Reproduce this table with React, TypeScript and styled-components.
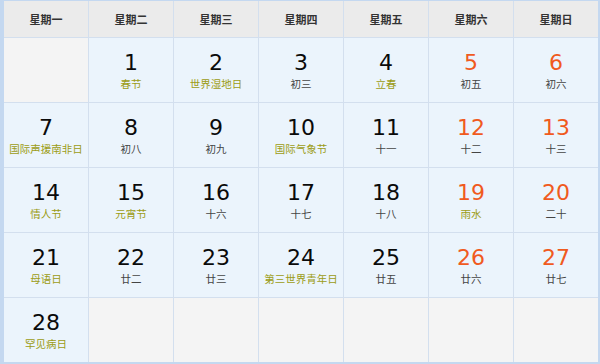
import React from 'react';
import styled, { createGlobalStyle } from 'styled-components';

const GlobalStyle = createGlobalStyle`
  html, body {
    margin: 0;
    padding: 0;
    background: #ffffff;
  }
`;

type Day = {
  num?: number;
  sub?: string;
  festival?: boolean;
};

const WEEK = ['星期一', '星期二', '星期三', '星期四', '星期五', '星期六', '星期日'];

const DAYS: Day[] = [
  {},
  { num: 1, sub: '春节', festival: true },
  { num: 2, sub: '世界湿地日', festival: true },
  { num: 3, sub: '初三' },
  { num: 4, sub: '立春', festival: true },
  { num: 5, sub: '初五' },
  { num: 6, sub: '初六' },
  { num: 7, sub: '国际声援南非日', festival: true },
  { num: 8, sub: '初八' },
  { num: 9, sub: '初九' },
  { num: 10, sub: '国际气象节', festival: true },
  { num: 11, sub: '十一' },
  { num: 12, sub: '十二' },
  { num: 13, sub: '十三' },
  { num: 14, sub: '情人节', festival: true },
  { num: 15, sub: '元宵节', festival: true },
  { num: 16, sub: '十六' },
  { num: 17, sub: '十七' },
  { num: 18, sub: '十八' },
  { num: 19, sub: '雨水', festival: true },
  { num: 20, sub: '二十' },
  { num: 21, sub: '母语日', festival: true },
  { num: 22, sub: '廿二' },
  { num: 23, sub: '廿三' },
  { num: 24, sub: '第三世界青年日', festival: true },
  { num: 25, sub: '廿五' },
  { num: 26, sub: '廿六' },
  { num: 27, sub: '廿七' },
  { num: 28, sub: '罕见病日', festival: true },
  {}, {}, {}, {}, {}, {},
];

const Calendar = styled.div`
  width: 600px;
  height: 364px;
  box-sizing: border-box;
  display: grid;
  grid-template-columns: repeat(7, 84px);
  grid-template-rows: 36px repeat(5, 64px);
  gap: 1px;
  background: #d3dfee;
  border-style: solid;
  border-color: #c4d8f0;
  border-width: 1px 2px 2px 4px;
`;

const HeadCell = styled.div`
  background: #ebebeb;
  display: flex;
  align-items: center;
  justify-content: center;
  font-family: "Noto Sans CJK SC", sans-serif;
  font-weight: bold;
  font-size: 11px;
  color: #333333;
`;

const DayCell = styled.div<{ $empty: boolean }>`
  background: ${p => (p.$empty ? '#f4f4f4' : '#ebf4fc')};
  display: flex;
  flex-direction: column;
  align-items: center;
  justify-content: center;
  padding-top: 1px;
`;

const Num = styled.div<{ $weekend: boolean }>`
  font-family: "DejaVu Sans", Verdana, sans-serif;
  font-size: 22px;
  line-height: 26px;
  color: ${p => (p.$weekend ? '#f05a1e' : '#0a0a0a')};
`;

const Sub = styled.div<{ $festival: boolean }>`
  font-family: "Noto Sans CJK SC", sans-serif;
  font-size: 10.5px;
  line-height: 16px;
  color: ${p => (p.$festival ? '#9c9c14' : '#444444')};
`;

export default function App() {
  return (
    <>
      <GlobalStyle />
      <Calendar>
        {WEEK.map(w => (
          <HeadCell key={w}>{w}</HeadCell>
        ))}
        {DAYS.map((d, i) => (
          <DayCell key={i} $empty={d.num === undefined}>
            {d.num !== undefined && (
              <>
                <Num $weekend={i % 7 >= 5}>{d.num}</Num>
                <Sub $festival={!!d.festival}>{d.sub}</Sub>
              </>
            )}
          </DayCell>
        ))}
      </Calendar>
    </>
  );
}
